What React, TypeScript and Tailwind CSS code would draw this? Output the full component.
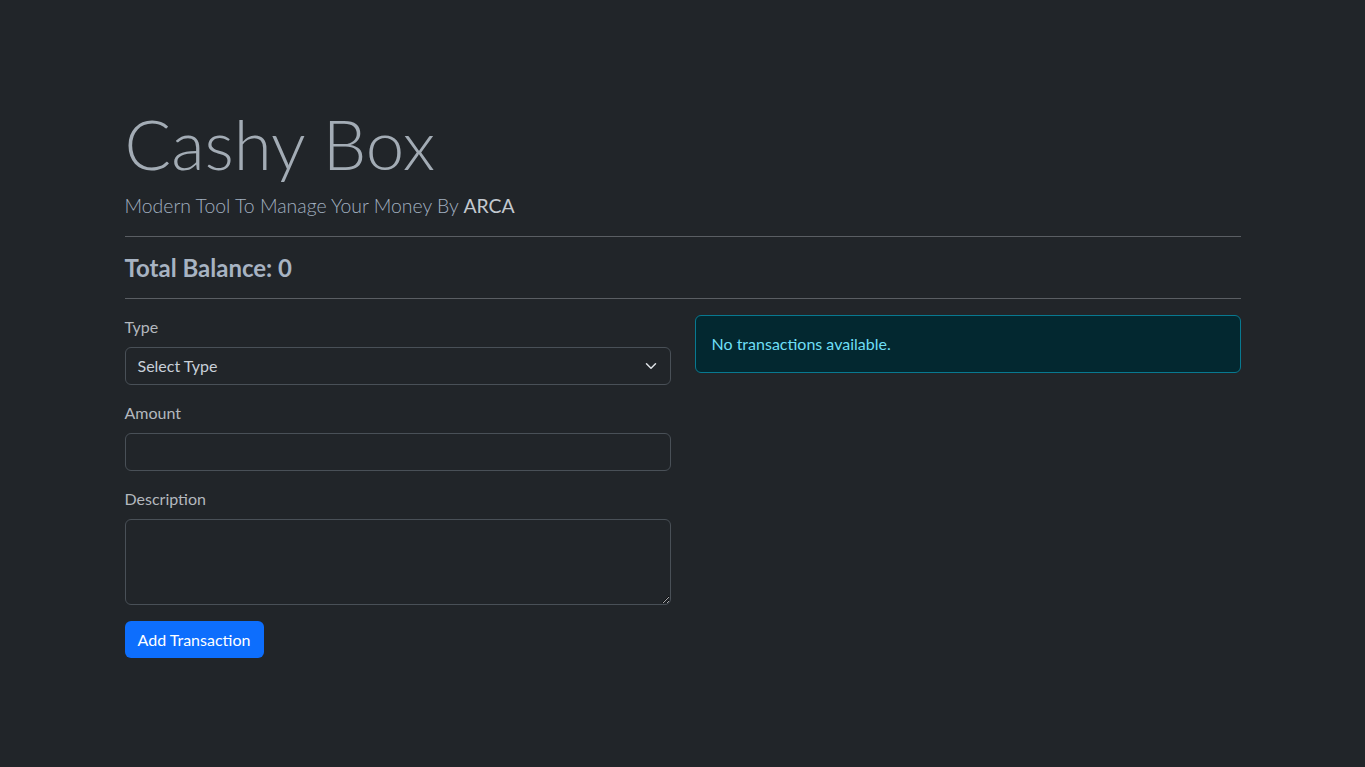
import React from "react";

export default function App() {
  return (
    <div
      className="min-h-[767px] w-full bg-[#212529] text-[#dee2e6]"
      style={{ fontFamily: "Lato, 'Open Sans', sans-serif" }}
    >
      <div className="mx-auto max-w-[1140px] px-3 pt-[98px]">
        <h1 className="m-0 text-[69px] font-light leading-[91px] text-[#a3acb5]">Cashy Box</h1>
        <p className="m-0 mt-[2px] text-[19.4px] font-light leading-[29px] text-[#a2b0c0]">
          Modern Tool To Manage Your Money By <span className="font-normal text-[#c3c9d0]">ARCA</span>
        </p>
        <hr className="my-4 border-0 border-t border-[#5a5e63]" />
        <h4 className="m-0 text-[24px] font-bold leading-[29px] text-[#a7b3c2]">Total Balance: 0</h4>
        <hr className="my-4 border-0 border-t border-[#5a5e63]" />
        <div className="grid grid-cols-2 gap-6">
          <div className="flex flex-col">
            <label className="mb-2 text-[16px] leading-6 text-[#b3b8be]">Type</label>
            <div className="relative mb-4">
              <div className="flex h-[38px] items-center rounded-md border border-[#495057] bg-[#212529] px-3 text-[16px] text-[#c8d0d9]">
                Select Type
              </div>
              <svg
                className="absolute right-[12px] top-[13px]"
                width="16"
                height="12"
                viewBox="0 0 16 16"
                fill="none"
                stroke="#dee2e6"
                strokeWidth="2"
                strokeLinecap="round"
                strokeLinejoin="round"
              >
                <path d="m2 5 6 6 6-6" />
              </svg>
            </div>
            <label className="mb-2 text-[16px] leading-6 text-[#b3b8be]">Amount</label>
            <input
              type="text"
              className="mb-4 h-[38px] rounded-md border border-[#495057] bg-[#212529] px-3 text-[16px] outline-none"
            />
            <label className="mb-2 text-[16px] leading-6 text-[#b3b8be]">Description</label>
            <textarea className="mb-4 h-[86px] rounded-md border border-[#495057] bg-[#212529] px-3 py-1.5 text-[16px] outline-none" />
            <div>
              <button className="h-[37px] w-[139px] rounded-md bg-[#0d6efd] text-center text-[16px] text-white">
                Add Transaction
              </button>
            </div>
          </div>
          <div>
            <div className="flex h-[58px] items-center rounded-md border border-[#087990] bg-[#032830] px-4 text-[16px] text-[#6edff6]">
              No transactions available.
            </div>
          </div>
        </div>
      </div>
    </div>
  );
}
